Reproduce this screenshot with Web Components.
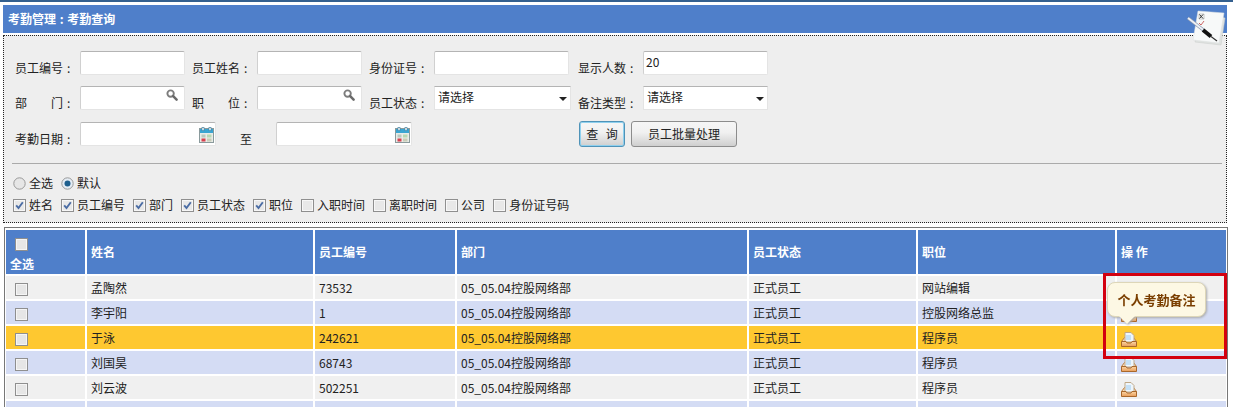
<!DOCTYPE html>
<html lang="zh"><head><meta charset="utf-8">
<style>
html,body{margin:0;padding:0;background:#fff;height:407px;overflow:hidden}
body{font:12px/16px "Noto Sans CJK SC","Liberation Sans",sans-serif;color:#222}
</style></head><body>
<attendance-page></attendance-page>
<script>
const F='"Noto Sans CJK SC","Liberation Sans",sans-serif';
const ICONS={
 search:`<svg width="12" height="12" viewBox="0 0 12 12"><circle cx="4.6" cy="4.6" r="3.2" fill="#fff" stroke="#7c7c7c" stroke-width="1.9"/><path d="M7.2 7.2 10.6 10.6" stroke="#6a6a6a" stroke-width="2.5" stroke-linecap="round"/></svg>`,
 cal:`<svg width="15" height="16" viewBox="0 0 15 16"><rect x=".5" y="1.5" width="14" height="14" fill="#e9ece8" stroke="#8a9a9c"/><rect x="1" y="2" width="13" height="4" fill="#3aa5d2"/><rect x="3" y=".5" width="2" height="3" fill="#fff" stroke="#39789a" stroke-width=".6"/><rect x="10" y=".5" width="2" height="3" fill="#fff" stroke="#39789a" stroke-width=".6"/><rect x="2.5" y="7.5" width="4" height="3" fill="#b9c9c0"/><rect x="8" y="7.5" width="4.5" height="3" fill="#b7d9b3"/><rect x="2.5" y="11.5" width="4" height="3" fill="#d8404f"/><rect x="8" y="11.5" width="4.5" height="3" fill="#c9cdb8"/></svg>`,
 tray:`<svg width="16" height="15" viewBox="0 0 16 15" style="display:block"><defs><linearGradient id="tg" x1="0" y1="0" x2="0" y2="1"><stop offset="0" stop-color="#fbd6a6"/><stop offset="1" stop-color="#e89c58"/></linearGradient></defs><path d="M3.500 5.500.5 9.500H15.500L12.500 5.500Z" fill="#f8dcb8" stroke="#b87c40"/><path d="M4 .5H10L13 3.500V10H4Z" fill="#eef6fc" stroke="#bfa888"/><path d="M5 3H10V8H5Z" fill="#c4e0f6"/><path d="M.5 9.500H5L6 11H10L11 9.500H15.500V14.500H.5Z" fill="url(#tg)" stroke="#a9682c"/></svg>`,
 note:`<svg width="44" height="44" viewBox="0 0 44 44"><path d="M13 5 38 10 34 37 8 34Z" fill="#dfe2e0" stroke="#c8cccb" stroke-width=".5"/><path d="M11 3 37 5 32 35 6 32Z" fill="#f7f9f9" stroke="#dde0e1" stroke-width=".5"/><path d="M12 6h5v5h-5Z" fill="none" stroke="#aaa" stroke-width=".6"/><path d="M12.500 6.500 16 10.500M16 6.500 12.500 10.500" stroke="#333" stroke-width="1"/><path d="M12 15l2 2 3-4" stroke="#c66" stroke-width="1" fill="none"/><path d="M1 10 17 22.500" stroke="#8b97ad" stroke-width="3.200"/><path d="M1 10 17 22.500" stroke="#eef1f6" stroke-width="1.800"/><path d="M16 22 24 28.500" stroke="#111" stroke-width="4"/><path d="M24 28.500 30 33" stroke="#333" stroke-width="1.200"/></svg>`
};
function tpl(html){const t=document.createElement('template');t.innerHTML=html;return t}
class Base extends HTMLElement{
 constructor(){super();this.attachShadow({mode:'open'})}
 put(html){this.shadowRoot.appendChild(tpl(html).content.cloneNode(true))}
}
class TextBox extends Base{connectedCallback(){
 const w=this.getAttribute('w'),icon=this.getAttribute('icon'),v=this.getAttribute('value')||'';
 this.put(`<style>:host{display:block;box-sizing:border-box;width:${w}px;height:24px;position:relative;background:#fff;border:1px solid #e4e4e4;border-top:1px solid #b4b4b4;border-left-color:#d0d0d0;border-radius:2px;font:12px/20px ${F};color:#222;padding-left:2px}
 .i{position:absolute;display:block;right:${icon==='cal'?1:6}px;top:${icon==='cal'?4:2}px;line-height:0}</style>${v}${icon?`<span class="i">${ICONS[icon]}</span>`:''}`);
}}
class SelectBox extends Base{connectedCallback(){
 const w=this.getAttribute('w');
 this.put(`<style>:host{display:block;box-sizing:border-box;width:${w}px;height:24px;position:relative;background:#fff;border:1px solid #e4e4e4;border-top:1px solid #b4b4b4;font:12px/20px ${F};color:#222;padding-left:3px}
 i{position:absolute;right:3px;top:10px;width:0;height:0;border:4px solid transparent;border-top:4px solid #222;border-bottom:0}</style>请选择<i></i>`);
}}
class FieldLabel extends Base{connectedCallback(){
 const w=this.getAttribute('w')||65,t=this.hasAttribute('plain');
 this.put(`<style>:host{display:block;box-sizing:border-box;width:${w}px;height:24px;font:12px/33px ${F};color:#222;white-space:nowrap}
 .t{display:inline-block;width:${t?12:48}px;text-align-last:justify}.c{display:inline-block;margin-left:4px}</style><span class="t"><slot></slot></span>${t?'':'<span class="c">:</span>'}`);
}}
class Check extends Base{connectedCallback(){
 const on=this.hasAttribute('checked'),r=this.hasAttribute('radio');
 const inner=r?`<svg width="13" height="13" viewBox="0 0 13 13"><circle cx="6.500" cy="6.500" r="5.700" fill="${on?'#e4ecf4':'#e6e6e6'}" stroke="#999"/>${on?'<circle cx="6.500" cy="6.500" r="3" fill="#1e5f8e"/>':''}</svg>`
 :`<svg width="13" height="13" viewBox="0 0 13 13"><rect x=".5" y=".5" width="12" height="12" fill="#e8e8e8" stroke="#8f8f8f"/><rect x="1.500" y="1.500" width="10" height="10" fill="none" stroke="#f7f7f7"/>${on?'<path d="M3.200 6.300 5.500 9 9.800 3.200" stroke="#4a6ca4" stroke-width="1.900" fill="none"/>':''}</svg>`;
 this.put(`<style>:host{display:inline-flex;align-items:center;gap:3px;height:16px;font:12px/16px ${F};color:#222;white-space:nowrap}svg{display:block}</style>${inner}<slot></slot>`);
}}
class PushButton extends Base{connectedCallback(){
 const p=this.hasAttribute('primary');
 this.put(`<style>:host{display:block;box-sizing:border-box;width:${this.getAttribute('w')}px;height:26px;margin-top:-1px;border-radius:3px;text-align:center;font:12px/24px ${F};color:#222;white-space:pre;word-spacing:5px;
 border:1px solid ${p?'#4f93b8':'#8c8c8c'};background:linear-gradient(#f6f6f6,#f0f0f0 45%,#cfcfcf);${p?'box-shadow:inset 0 0 0 1px #8fd0ee;':''}}</style><slot></slot>`);
}}
class FormRow extends Base{connectedCallback(){
 this.put(`<style>:host{display:flex;height:24px;align-items:flex-start}</style><slot></slot>`);
}}
class FilterPanel extends Base{connectedCallback(){
 this.put(`<style>:host{display:block;box-sizing:border-box;height:188px;margin:2px 6px 0 3px;background:#eeeeee;border:1px dotted #222;padding:15px 0 0 11px;color:#222}</style><slot></slot>`);
}}
class DataGrid extends Base{connectedCallback(){
 const cols=[79,226,140,290,167,197,109];
 const heads=['姓名','员工编号','部门','员工状态','职位','操 作'];
 const rows=[['孟陶然','73532','05_05.04控股网络部','正式员工','网站编辑'],['李宇阳','1','05_05.04控股网络部','正式员工','控股网络总监'],['于泳','242621','05_05.04控股网络部','正式员工','程序员'],['刘国昊','68743','05_05.04控股网络部','正式员工','程序员'],['刘云波','502251','05_05.04控股网络部','正式员工','程序员'],['','','','','']];
 const box=`<svg width="13" height="13" viewBox="0 0 13 13" style="display:block"><rect x=".5" y=".5" width="12" height="12" fill="#e6e6e6" stroke="#8f8f8f"/><rect x="1.500" y="1.500" width="10" height="10" fill="none" stroke="#f5f5f5"/></svg>`;
 let body='';
 rows.forEach((r,i)=>{
  const c=i===2?'hi':(i%2?'b':'a');
  body+=`<tr class="${c}"><td class="ck">${box}</td>${r.map(x=>`<td>${x}</td>`).join('')}<td class="op">${ICONS.tray}</td></tr>`;
 });
 this.put(`<style>:host{display:block;box-sizing:border-box;margin:4px 5px 0 4px;height:180px;border:1px solid #777;border-bottom:0;overflow:hidden;font:12px/16px ${F};color:#222}
 table{border-collapse:separate;border-spacing:2px;table-layout:fixed;width:1224px;margin:0 0 0 -1px}
 th{background:#4f7fca;color:#fff;height:44px;padding:0 0 0 4px;text-align:left;font-weight:700;box-sizing:border-box;vertical-align:middle}
 td{height:23px;padding:0 0 0 4px;box-sizing:border-box;vertical-align:middle;white-space:nowrap;overflow:hidden}
 .a td{background:#f0f0f0}.b td{background:#d4dcf4}.hi td{background:#fec830}
 td.ck{padding:3px 0 0 9px}td.op{padding:3px 0 0 4px}
 th.ck{padding:8px 0 0 4px;line-height:14px;vertical-align:top}th.ck svg{margin:0 0 6px 5px}
 </style><table><colgroup>${cols.map(w=>`<col style="width:${w}px">`).join('')}</colgroup><thead><tr><th class="ck">${box}全选</th>${heads.map(h=>`<th>${h}</th>`).join('')}</tr></thead><tbody>${body}</tbody></table>`);
}}
class CalloutMark extends Base{connectedCallback(){
 this.put(`<style>:host{position:absolute;left:1103px;top:273px;width:124px;height:86px;box-sizing:border-box;border:3px solid #d3000f;display:block}
 .wrap{position:absolute;left:1px;top:6px;filter:drop-shadow(1px 1px 1px #aaa)}
 .tip{position:relative;width:99px;height:35px;box-sizing:border-box;background:#fdf8e4;border:1px solid #ddd6b8;border-radius:8px;color:#7a3e00;font:700 13px/33px ${F};text-align:center;white-space:nowrap}
 .tip:after{content:"";position:absolute;left:11px;top:33px;border:8px solid transparent;border-top:8px solid #fdf8e4;border-bottom:0}</style><div class="wrap"><div class="tip">个人考勤备注</div></div>`);
}}
class AttendancePage extends Base{connectedCallback(){
 const row=(items,extra='')=>`<form-row${extra}>${items}</form-row>`;
 const lab=(t)=>`<field-label>${t}</field-label>`;
 this.put(`<style>:host{display:block;width:1233px;height:407px;position:relative;overflow:hidden;font:12px/16px ${F}}
 .top{height:2px;background:#34608f}
 .head{margin:3px 6px 0 3px;height:28px;background:#4f7fca;color:#fff;font:700 12px/28px ${F};padding-left:5px;word-spacing:1px}
 .note{position:absolute;left:1187px;top:8px;line-height:0}
 .rows{display:flex;flex-direction:column;gap:11px}
 .s{width:7px;flex:none}
 hr{border:0;border-top:1px solid #aaa;margin:0 0 0 -3px;height:0;width:1210px}
 .sep{padding-top:17px}
 .cks{display:flex;gap:8px;height:16px;margin:11px 0 0 -2px;align-items:center}
 .cks.two{margin-top:6px}
 </style>
 <div class="top"></div>
 <div class="head">考勤管理 : 考勤查询</div>
 <filter-panel>
  <div class="rows">
   ${row(`${lab('员工编号')}<text-box w="105"></text-box><span class="s"></span>${lab('员工姓名')}<text-box w="105"></text-box><span class="s"></span>${lab('身份证号')}<text-box w="135"></text-box><span class="s" style="width:9px"></span>${lab('显示人数')}<text-box w="125" value="20"></text-box>`)}
   ${row(`${lab('部 门')}<text-box w="105" icon="search"></text-box><span class="s"></span>${lab('职 位')}<text-box w="105" icon="search"></text-box><span class="s"></span>${lab('员工状态')}<select-box w="137"></select-box><span class="s"></span>${lab('备注类型')}<select-box w="125"></select-box>`)}
   ${row(`${lab('考勤日期')}<text-box w="136" icon="cal"></text-box><span class="s" style="width:24px"></span><field-label plain w="36">至</field-label><text-box w="136" icon="cal"></text-box><span class="s" style="width:167px"></span><push-button primary w="46">查 询</push-button><span class="s" style="width:6px"></span><push-button w="106">员工批量处理</push-button>`,' style="margin-top:1px"')}
  </div>
  <div class="sep"><hr></div>
  <div class="cks"><check-box radio>全选</check-box><check-box radio checked>默认</check-box></div>
  <div class="cks two"><check-box checked>姓名</check-box><check-box checked>员工编号</check-box><check-box checked>部门</check-box><check-box checked>员工状态</check-box><check-box checked>职位</check-box><check-box>入职时间</check-box><check-box>离职时间</check-box><check-box>公司</check-box><check-box>身份证号码</check-box></div>
 </filter-panel>
 <data-grid></data-grid>
 <span class="note">${ICONS.note}</span>
 <callout-mark></callout-mark>`);
}}
customElements.define('text-box',TextBox);
customElements.define('select-box',SelectBox);
customElements.define('field-label',FieldLabel);
customElements.define('check-box',Check);
customElements.define('push-button',PushButton);
customElements.define('form-row',FormRow);
customElements.define('filter-panel',FilterPanel);
customElements.define('data-grid',DataGrid);
customElements.define('callout-mark',CalloutMark);
customElements.define('attendance-page',AttendancePage);
</script>
</body></html>
